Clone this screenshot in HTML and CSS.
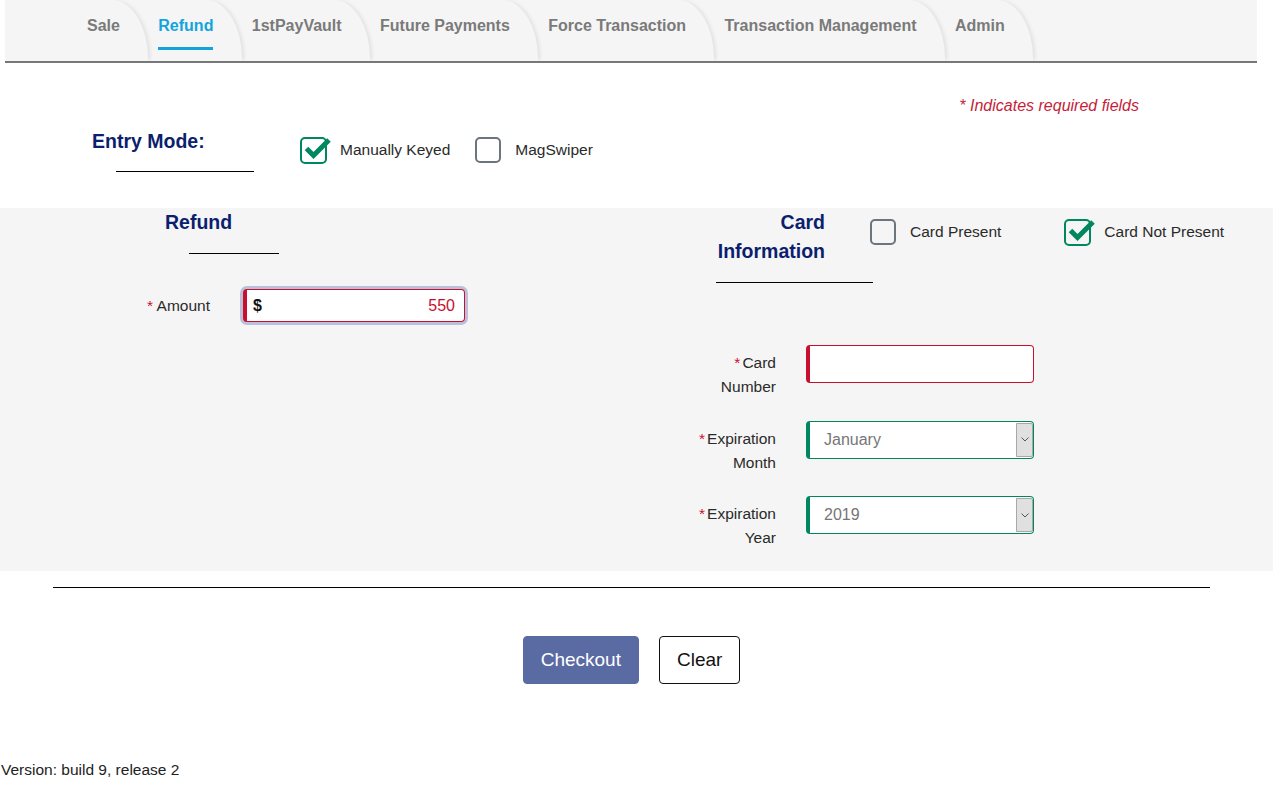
FILE: index.html
```
<!DOCTYPE html>
<html lang="en">
<head>
<meta charset="utf-8">
<title>Refund</title>
<link rel="stylesheet" href="styles.css">
</head>
<body>
<div class="page">
  <nav class="tabs">
    <ul class="tab-list">
      <li class="tab"><span class="tab-text">Sale</span></li>
      <li class="tab active"><span class="tab-text">Refund</span></li>
      <li class="tab"><span class="tab-text">1stPayVault</span></li>
      <li class="tab"><span class="tab-text">Future Payments</span></li>
      <li class="tab"><span class="tab-text">Force Transaction</span></li>
      <li class="tab"><span class="tab-text">Transaction Management</span></li>
      <li class="tab"><span class="tab-text">Admin</span></li>
    </ul>
  </nav>

  <p class="required">* Indicates required fields</p>

  <section class="entry">
    <div class="entry-head">
      <h2 class="heading">Entry Mode:</h2>
      <div class="rule rule-entry"></div>
    </div>
    <div class="checks">
      <label class="check">
        <svg class="box" width="32" height="28" viewBox="0 0 32 28"><rect x="1" y="2" width="25" height="25" rx="4" fill="none" stroke="#00875f" stroke-width="2"/><path d="M6.5 12.5 L13.5 19.5 L29 4" fill="none" stroke="#00875f" stroke-width="5" stroke-linejoin="miter"/></svg>
        <span class="check-label">Manually Keyed</span>
      </label>
      <label class="check">
        <svg class="box" width="32" height="28" viewBox="0 0 32 28"><rect x="1" y="2" width="24" height="24" rx="4" fill="none" stroke="#6c757d" stroke-width="2"/></svg>
        <span class="check-label">MagSwiper</span>
      </label>
    </div>
  </section>

  <section class="band">
    <div class="col-left">
      <h3 class="heading refund-head">Refund</h3>
      <div class="rule rule-refund"></div>
      <div class="amount-row">
        <div class="label amount-label"><span class="star">*</span> Amount</div>
        <div class="amount-field"><span class="dollar">$</span><span class="amount-value">550</span></div>
      </div>
    </div>
    <div class="col-right">
      <div class="card-head">
        <h3 class="heading card-title">Card<br>Information</h3>
        <label class="check card-present">
          <svg class="box" width="32" height="28" viewBox="0 0 32 28"><rect x="1" y="2" width="24" height="24" rx="4" fill="none" stroke="#6c757d" stroke-width="2"/></svg>
          <span class="check-label">Card Present</span>
        </label>
        <label class="check card-not-present">
          <svg class="box" width="32" height="28" viewBox="0 0 32 28"><rect x="1" y="2" width="25" height="25" rx="4" fill="none" stroke="#00875f" stroke-width="2"/><path d="M6.5 12.5 L13.5 19.5 L29 4" fill="none" stroke="#00875f" stroke-width="5"/></svg>
          <span class="check-label">Card Not Present</span>
        </label>
      </div>
      <div class="rule rule-card"></div>
      <div class="form-rows">
        <div class="form-row">
          <div class="label row-label"><span class="star star-tight">*</span>Card<br>Number</div>
          <div class="text-field"></div>
        </div>
        <div class="form-row">
          <div class="label row-label"><span class="star star-tight">*</span>Expiration<br>Month</div>
          <div class="select"><span class="select-value">January</span><span class="select-arrow"><svg width="8" height="5" viewBox="0 0 8 5"><path d="M0.5 0.5 L4 4 L7.5 0.5" fill="none" stroke="#555" stroke-width="1"/></svg></span></div>
        </div>
        <div class="form-row">
          <div class="label row-label"><span class="star star-tight">*</span>Expiration<br>Year</div>
          <div class="select"><span class="select-value">2019</span><span class="select-arrow"><svg width="8" height="5" viewBox="0 0 8 5"><path d="M0.5 0.5 L4 4 L7.5 0.5" fill="none" stroke="#555" stroke-width="1"/></svg></span></div>
        </div>
      </div>
    </div>
  </section>

  <div class="divider"></div>

  <div class="actions">
    <button class="btn btn-primary" type="button">Checkout</button>
    <button class="btn btn-clear" type="button">Clear</button>
  </div>

  <div class="version">Version: build 9, release 2</div>
</div>
</body>
</html>
```

FILE: styles.css
```
* { box-sizing: border-box; }
html, body { margin: 0; padding: 0; background: #fff; }
body {
  font-family: "Liberation Sans", Arial, sans-serif;
  color: #222;
}
.page { width: 1273px; }

/* Tabs */
.tabs {
  margin-left: 5px;
  width: 1252px;
  height: 63px;
  background: #f5f5f5;
  border-bottom: 2px solid #77777a;
  overflow: hidden;
}
.tab-list {
  list-style: none;
  margin: 0;
  padding: 0 0 0 72px;
  display: flex;
  height: 61px;
}
.tab {
  height: 61px;
  padding: 16px 28.4px 0 10px;
  border-top-right-radius: 36px 58px;
  box-shadow: 3px 0 4px -1px rgba(0, 0, 0, 0.09);
  font-size: 16px;
  font-weight: bold;
  line-height: 20px;
  color: #7a7a7a;
  white-space: nowrap;
}
.tab-text { display: inline-block; padding-bottom: 11px; }
.tab.active { color: #12a4dd; }
.tab.active .tab-text { border-bottom: 3px solid #12a4dd; }

/* Required note */
.required {
  margin: 33px 0 0 0;
  padding-right: 134px;
  text-align: right;
  font-size: 16px;
  line-height: 20px;
  font-style: italic;
  color: #c41e3a;
}

.heading {
  margin: 0;
  font-size: 19.5px;
  font-weight: bold;
  color: #0b1f6e;
}
.rule { height: 0; border-top: 1px solid #000; }

/* Entry */
.entry { display: flex; align-items: flex-start; }
.entry-head { margin-left: 92px; width: 162px; padding-top: 13px; }
.entry-head .heading { line-height: 24px; }
.rule-entry { margin: 18px 0 0 24px; width: 138px; }
.checks { display: flex; margin-left: 46px; padding-top: 20px; gap: 25px; }
.check { display: flex; align-items: center; gap: 8px; }
.box { display: block; flex: none; }
.check-label { font-size: 15.5px; line-height: 20px; color: #2a2a2a; }

/* Band */
.band {
  margin-top: 36px;
  height: 363px;
  background: #f5f5f5;
  display: flex;
}
.col-left { width: 690px; }
.refund-head { margin-left: 165px; line-height: 28px; }
.rule-refund { margin: 17px 0 0 189px; width: 90px; }
.amount-row { display: flex; align-items: center; margin-top: 35px; }
.label { font-size: 15.5px; line-height: 24px; color: #2a2a2a; text-align: right; }
.star { color: #c8102e; }
.star-tight { margin-right: 2px; }
.amount-label { width: 210px; }
.amount-field {
  margin-left: 33px;
  width: 222px;
  height: 33px;
  background: #fff;
  border: 1px solid #c8102e;
  border-left: 4px solid #c8102e;
  border-radius: 4px;
  box-shadow: 0 0 0 3px #bac0d9;
  display: flex;
  align-items: center;
  justify-content: space-between;
  padding: 0 9px 0 6px;
  font-size: 16px;
}
.dollar { font-weight: bold; color: #111; }
.amount-value { color: #c8102e; }

.col-right { width: 583px; }
.card-head { display: flex; align-items: flex-start; }
.card-title { width: 135px; text-align: right; line-height: 29px; }
.card-present { margin-left: 45px; margin-top: 10px; }
.card-not-present { margin-left: 63px; margin-top: 10px; }
.rule-card { margin: 16px 0 0 26px; width: 157px; }
.form-rows { margin-top: 62px; display: flex; flex-direction: column; gap: 21.5px; }
.form-row { display: flex; align-items: flex-start; }
.row-label { width: 86px; padding-top: 6px; }
.text-field, .select {
  margin-left: 30px;
  width: 228px;
  height: 38px;
  background: #fff;
  border-radius: 4px;
}
.text-field { border: 1px solid #c8102e; border-left: 4px solid #c8102e; }
.select {
  border: 1px solid #00875f;
  border-left: 4px solid #00875f;
  display: flex;
  align-items: stretch;
}
.select-value {
  flex: 1;
  padding-left: 14px;
  font-size: 16px;
  line-height: 36px;
  color: #767676;
}
.select-arrow {
  width: 17px;
  margin: 1px 0;
  background: #e0e0e0;
  border: 1px solid #a8a8a8;
  border-radius: 0 2px 2px 0;
  display: flex;
  align-items: center;
  justify-content: center;
}
.select-arrow svg { display: block; }

/* Footer */
.divider { margin: 16px 0 0 53px; width: 1157px; border-top: 1px solid #000; height: 0; }
.actions {
  margin: 48px 0 0 53px;
  width: 1157px;
  display: flex;
  justify-content: center;
  gap: 20px;
}
.btn {
  height: 48px;
  padding: 0 17px;
  font-family: "Liberation Sans", Arial, sans-serif;
  font-size: 19px;
  border-radius: 4px;
  cursor: pointer;
}
.btn-primary { background: #5a6aa3; color: #fff; border: 1px solid #5a6aa3; }
.btn-clear { background: #fff; color: #111; border: 1px solid #111; }
.version {
  margin-top: 77px;
  padding-left: 1px;
  font-size: 15.5px;
  line-height: 18px;
  color: #222;
}
```
